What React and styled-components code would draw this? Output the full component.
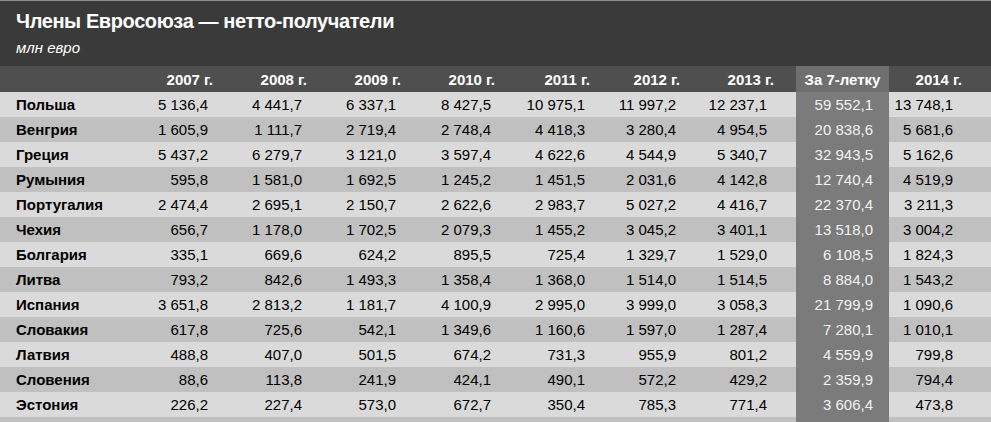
import React from "react";
import styled, { createGlobalStyle } from "styled-components";

const Global = createGlobalStyle`
  html, body { margin: 0; padding: 0; background: #d9d9d9; }
  body { font-family: "Liberation Sans", Arial, sans-serif; }
`;

const Wrap = styled.div`
  width: 991px;
  overflow: hidden;
`;

const TitleBar = styled.header`
  background: #3a3a3a;
  border-top: 1px solid #8c8c8c;
  height: 66px;
  padding: 0 16px;
  box-sizing: border-box;
  display: flex;
  flex-direction: column;
  justify-content: flex-start;
  color: #fff;
`;

const Title = styled.h1`
  margin: 9px 0 0;
  font-size: 20px;
  font-weight: bold;
  line-height: 22px;
  letter-spacing: -0.4px;
`;

const Subtitle = styled.div`
  margin-top: 7px;
  font-size: 15px;
  font-style: italic;
  line-height: 17px;
`;

const COLS = [
  { w: 120 },
  { w: 100, pad: 12, hpad: 7 },
  { w: 94, pad: 12, hpad: 7 },
  { w: 94, pad: 12, hpad: 7 },
  { w: 95, pad: 12, hpad: 8 },
  { w: 94, pad: 12, hpad: 7 },
  { w: 91, pad: 12, hpad: 8 },
  { w: 108, pad: 29, hpad: 22 },
  { w: 93, pad: 16, hpad: 0, hi: true },
  { w: 102, pad: 38, hpad: 29 },
];

const Grid = styled.div`
  display: grid;
  grid-template-columns: ${COLS.map((c) => c.w + "px").join(" ")};
`;

const HeadRow = styled(Grid)`
  background: #4f4f4f;
  height: 26px;
`;

const Row = styled(Grid)`
  background: ${(p) => (p.$dark ? "#c0c0c0" : "#dadada")};
  height: 25px;
`;

const HeadCell = styled.div`
  display: flex;
  align-items: center;
  justify-content: ${(p) => (p.$hi ? "center" : "flex-end")};
  padding-right: ${(p) => p.$pad || 0}px;
  background: ${(p) => (p.$hi ? "#6f6f6f" : "transparent")};
  color: #fff;
  font-weight: bold;
  font-size: 15px;
  white-space: nowrap;
`;

const Label = styled.div`
  display: flex;
  align-items: center;
  padding-left: 16px;
  font-weight: bold;
  font-size: 15px;
  color: #000;
  white-space: nowrap;
`;

const Cell = styled.div`
  display: flex;
  align-items: center;
  justify-content: flex-end;
  padding-right: ${(p) => p.$pad}px;
  font-size: 15px;
  color: ${(p) => (p.$hi ? "#f2f2f2" : "#000")};
  background: ${(p) => (p.$hi ? "#7b7b7b" : "transparent")};
  white-space: nowrap;
`;

const HEAD = ["", "2007 г.", "2008 г.", "2009 г.", "2010 г.", "2011 г.", "2012 г.", "2013 г.", "За 7-летку", "2014 г."];

const DATA = [
  ["Польша", "5 136,4", "4 441,7", "6 337,1", "8 427,5", "10 975,1", "11 997,2", "12 237,1", "59 552,1", "13 748,1"],
  ["Венгрия", "1 605,9", "1 111,7", "2 719,4", "2 748,4", "4 418,3", "3 280,4", "4 954,5", "20 838,6", "5 681,6"],
  ["Греция", "5 437,2", "6 279,7", "3 121,0", "3 597,4", "4 622,6", "4 544,9", "5 340,7", "32 943,5", "5 162,6"],
  ["Румыния", "595,8", "1 581,0", "1 692,5", "1 245,2", "1 451,5", "2 031,6", "4 142,8", "12 740,4", "4 519,9"],
  ["Португалия", "2 474,4", "2 695,1", "2 150,7", "2 622,6", "2 983,7", "5 027,2", "4 416,7", "22 370,4", "3 211,3"],
  ["Чехия", "656,7", "1 178,0", "1 702,5", "2 079,3", "1 455,2", "3 045,2", "3 401,1", "13 518,0", "3 004,2"],
  ["Болгария", "335,1", "669,6", "624,2", "895,5", "725,4", "1 329,7", "1 529,0", "6 108,5", "1 824,3"],
  ["Литва", "793,2", "842,6", "1 493,3", "1 358,4", "1 368,0", "1 514,0", "1 514,5", "8 884,0", "1 543,2"],
  ["Испания", "3 651,8", "2 813,2", "1 181,7", "4 100,9", "2 995,0", "3 999,0", "3 058,3", "21 799,9", "1 090,6"],
  ["Словакия", "617,8", "725,6", "542,1", "1 349,6", "1 160,6", "1 597,0", "1 287,4", "7 280,1", "1 010,1"],
  ["Латвия", "488,8", "407,0", "501,5", "674,2", "731,3", "955,9", "801,2", "4 559,9", "799,8"],
  ["Словения", "88,6", "113,8", "241,9", "424,1", "490,1", "572,2", "429,2", "2 359,9", "794,4"],
  ["Эстония", "226,2", "227,4", "573,0", "672,7", "350,4", "785,3", "771,4", "3 606,4", "473,8"],
  ["", "", "", "", "", "", "", "", "", ""],
];

export default function App() {
  return (
    <Wrap>
      <Global />
      <TitleBar>
        <Title>Члены Евросоюза — нетто-получатели</Title>
        <Subtitle>млн евро</Subtitle>
      </TitleBar>
      <HeadRow>
        {HEAD.map((h, i) => (
          <HeadCell key={i} $hi={COLS[i].hi} $pad={COLS[i].hpad}>
            {h}
          </HeadCell>
        ))}
      </HeadRow>
      {DATA.map((row, r) => (
        <Row key={r} $dark={r % 2 === 1}>
          {row.map((v, i) =>
            i === 0 ? (
              <Label key={i}>{v}</Label>
            ) : (
              <Cell key={i} $pad={COLS[i].pad} $hi={COLS[i].hi}>
                {v.replace(/ /g, "\u00a0")}
              </Cell>
            )
          )}
        </Row>
      ))}
    </Wrap>
  );
}
